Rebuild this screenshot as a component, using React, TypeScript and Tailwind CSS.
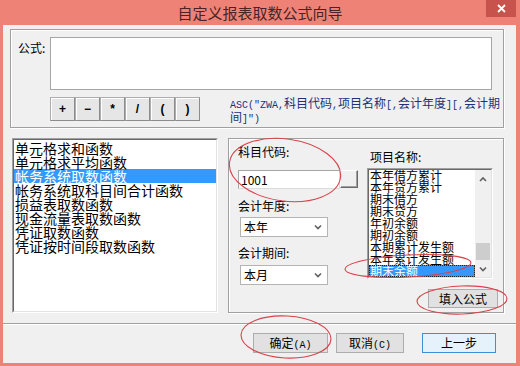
import React from 'react';

const FUNCS = [
  '单元格求和函数',
  '单元格求平均函数',
  '帐务系统取数函数',
  '帐务系统取科目间合计函数',
  '损益表取数函数',
  '现金流量表取数函数',
  '凭证取数函数',
  '凭证按时间段取数函数',
];

const ITEMS = [
  '本年借方累计',
  '本年贷方累计',
  '期末借方',
  '期末贷方',
  '年初余额',
  '期初余额',
  '本期累计发生额',
  '本年累计发生额',
  '期末余额',
];

const OPS = ['+', '−', '*', '/', '(', ')'];

// half-width ascii like the old SimSun dialogs
function Mixed({ text }: { text: string }) {
  const parts = text.match(/[\x00-\x7f]+|[^\x00-\x7f]+/g) ?? [];
  return (
    <>
      {parts.map((p, i) =>
        /^[\x00-\x7f]/.test(p) ? (
          <span key={i} className="font-['Liberation_Mono',monospace] text-[10px]">{p}</span>
        ) : (
          <span key={i}>{p}</span>
        )
      )}
    </>
  );
}

function Sunken({ className, children }: { className: string; children?: React.ReactNode }) {
  return (
    <div className={`border border-[#a0a0a0] border-r-white border-b-white ${className}`}>
      <div className="h-full border border-[#696969] border-r-[#e3e3e3] border-b-[#e3e3e3] bg-white overflow-hidden">
        {children}
      </div>
    </div>
  );
}

function Chevron({ up }: { up?: boolean }) {
  return (
    <svg width="8" height="6" viewBox="0 0 8 6">
      <polyline
        points={up ? '1,5 4,2 7,5' : '1,1.5 4,4.5 7,1.5'}
        fill="none"
        stroke="#606060"
        strokeWidth="1.6"
      />
    </svg>
  );
}

function Select({ value }: { value: string }) {
  return (
    <div className="flex items-center justify-between w-[88px] h-[20px] ml-[2px] pl-[3px] pr-[5px] border border-[#b4b4b4] bg-white text-[12px]">
      <span>{value}</span>
      <Chevron />
    </div>
  );
}

export default function App() {
  return (
    <div className="relative w-[520px] h-[366px] flex flex-col bg-[#ef8276] text-black font-['Noto_Sans_CJK_SC',sans-serif] overflow-hidden">
      {/* title bar */}
      <div className="relative h-[25px] flex items-center justify-center">
        <span className="text-[15px] leading-none text-[#4a2424]">自定义报表取数公式向导</span>
        <div className="absolute top-0 right-[4px] w-[30px] h-[17px] bg-[#c8524c] flex items-center justify-center">
          <svg width="9" height="9" viewBox="0 0 9 9">
            <path d="M1 1 L8 8 M8 1 L1 8" stroke="#fff" strokeWidth="1.8" />
          </svg>
        </div>
      </div>

      <div className="flex-1 ml-[3px] mr-[4px] mb-[3px] bg-[#f0f0f0] flex flex-col">
        <div className="pt-[4px] pl-[7px] pr-[12px]">
          {/* formula group */}
          <div className="h-[99px] border border-[#a0a0a0] shadow-[inset_1px_1px_0_#fff,1px_1px_0_#fff] pt-[7px] pl-[7px]">
            <div className="flex">
              <span className="w-[32px] mt-[3px] text-[12px] leading-[16px]">公式:</span>
              <div className="w-[442px] h-[53px] border border-[#a5a5a5] bg-white" />
            </div>
            <div className="flex mt-[7px] pl-[32px]">
              {OPS.map(op => (
                <button
                  key={op}
                  className="w-[25px] h-[24px] flex items-center justify-center border border-[#adadad] border-r-[#8c8c8c] border-b-[#8c8c8c] bg-[#e6e6e6] shadow-[inset_1px_1px_0_#fff] text-[12px] font-bold font-['Liberation_Sans',sans-serif]"
                >
                  {op}
                </button>
              ))}
              <div className="ml-[30px] text-[12px] leading-[11px] text-[#22307a] whitespace-nowrap">
                <div><Mixed text={'ASC("ZWA,科目代码,项目名称[,会计年度][,会计期'} /></div>
                <div><Mixed text={'间]")'} /></div>
              </div>
            </div>
          </div>

          {/* middle */}
          <div className="flex mt-[10px] h-[175px]">
            <Sunken className="ml-[2px] w-[206px] h-[175px]">
              <div className="pt-px">
                {FUNCS.map((f, i) => (
                  <div
                    key={f}
                    className={
                      i === 2
                        ? 'h-[14px] pl-[1px] text-[14px] leading-[14px] whitespace-nowrap bg-[#3399ff] text-white'
                        : 'h-[14px] pl-[1px] text-[14px] leading-[14px] whitespace-nowrap'
                    }
                  >
                    {f}
                  </div>
                ))}
              </div>
            </Sunken>

            <div className="ml-[10px] w-[276px] h-[175px] border border-[#a0a0a0] shadow-[inset_1px_1px_0_#fff,1px_1px_0_#fff] pl-[9px] flex items-start">
              <div className="w-[129px] mt-[5px] flex flex-col items-start text-[12px] leading-[16px]">
                <span>科目代码:</span>
                <div className="flex mt-[10px]">
                  <div className="w-[102px] h-[19px] border border-[#a5a5a5] border-r-[#dcdcdc] border-b-[#dcdcdc] bg-white pl-[2px] leading-[17px]">
                    1001
                  </div>
                  <button className="w-[18px] h-[18px] border border-white border-r-[#696969] border-b-[#696969] bg-[#f0f0f0] shadow-[inset_-1px_-1px_0_#a0a0a0]" />
                </div>
                <span className="mt-[9px]">会计年度:</span>
                <div className="mt-[3px]"><Select value="本年" /></div>
                <span className="mt-[8px]">会计期间:</span>
                <div className="mt-[4px]"><Select value="本月" /></div>
              </div>

              <div className="w-[131px] mt-[10px] flex flex-col">
                <span className="pl-[3px] text-[12px] leading-[16px]">项目名称:</span>
                <Sunken className="mt-[3px] w-[126px] h-[111px]">
                  <div className="flex h-full">
                    <div className="flex-1 -mt-px">
                      {ITEMS.map((it, i) => (
                        <div
                          key={it}
                          className={
                            i === 8
                              ? 'h-[12px] pl-[1px] text-[12px] leading-[12px] whitespace-nowrap bg-[#3399ff] text-white outline outline-1 outline-dotted outline-[#222] -outline-offset-1'
                              : 'h-[12px] pl-[1px] text-[12px] leading-[12px] whitespace-nowrap'
                          }
                        >
                          {it}
                        </div>
                      ))}
                    </div>
                    <div className="w-[16px] h-full bg-[#f0f0f0] flex flex-col">
                      <div className="h-[17px] flex items-center justify-center"><Chevron up /></div>
                      <div className="flex-1 flex flex-col justify-end px-px">
                        <div className="h-[17px] bg-[#cdcdcd]" />
                      </div>
                      <div className="h-[17px] flex items-center justify-center"><Chevron /></div>
                    </div>
                  </div>
                </Sunken>
                <button className="self-end mt-[10px] w-[70px] h-[19px] border border-[#adadad] bg-[#e1e1e1] text-[12px] leading-[17px]">
                  填入公式
                </button>
              </div>
            </div>
          </div>
        </div>

        {/* separator */}
        <div className="mt-[10px] h-px bg-[#a0a0a0]" />
        <div className="h-px bg-white" />

        <div className="flex justify-end pt-[8px] pr-[20px] text-[12px]">
          <button className="w-[75px] h-[20px] border border-[#adadad] bg-[#e1e1e1] leading-[18px]">
            <Mixed text="确定(A)" />
          </button>
          <button className="ml-[8px] w-[68px] h-[20px] border border-[#adadad] bg-[#e1e1e1] leading-[18px]">
            <Mixed text="取消(C)" />
          </button>
          <button className="ml-[18px] w-[74px] h-[20px] border border-[#3c8fd8] bg-[#e5f1fb] leading-[18px]">
            上一步
          </button>
        </div>
      </div>

      {/* red hand-drawn annotations */}
      <svg className="absolute inset-0 pointer-events-none" width="520" height="366" viewBox="0 0 520 366">
        <g fill="none" stroke="#d8434a" strokeWidth="1.1">
          <ellipse cx="285" cy="170" rx="56" ry="31" transform="rotate(8 285 170)" />
          <ellipse cx="408" cy="266" rx="63" ry="11" transform="rotate(-3 408 266)" />
          <ellipse cx="462" cy="300" rx="45" ry="14" transform="rotate(-2 462 300)" />
          <ellipse cx="286" cy="337" rx="45" ry="21" transform="rotate(3 286 337)" />
        </g>
      </svg>
    </div>
  );
}
